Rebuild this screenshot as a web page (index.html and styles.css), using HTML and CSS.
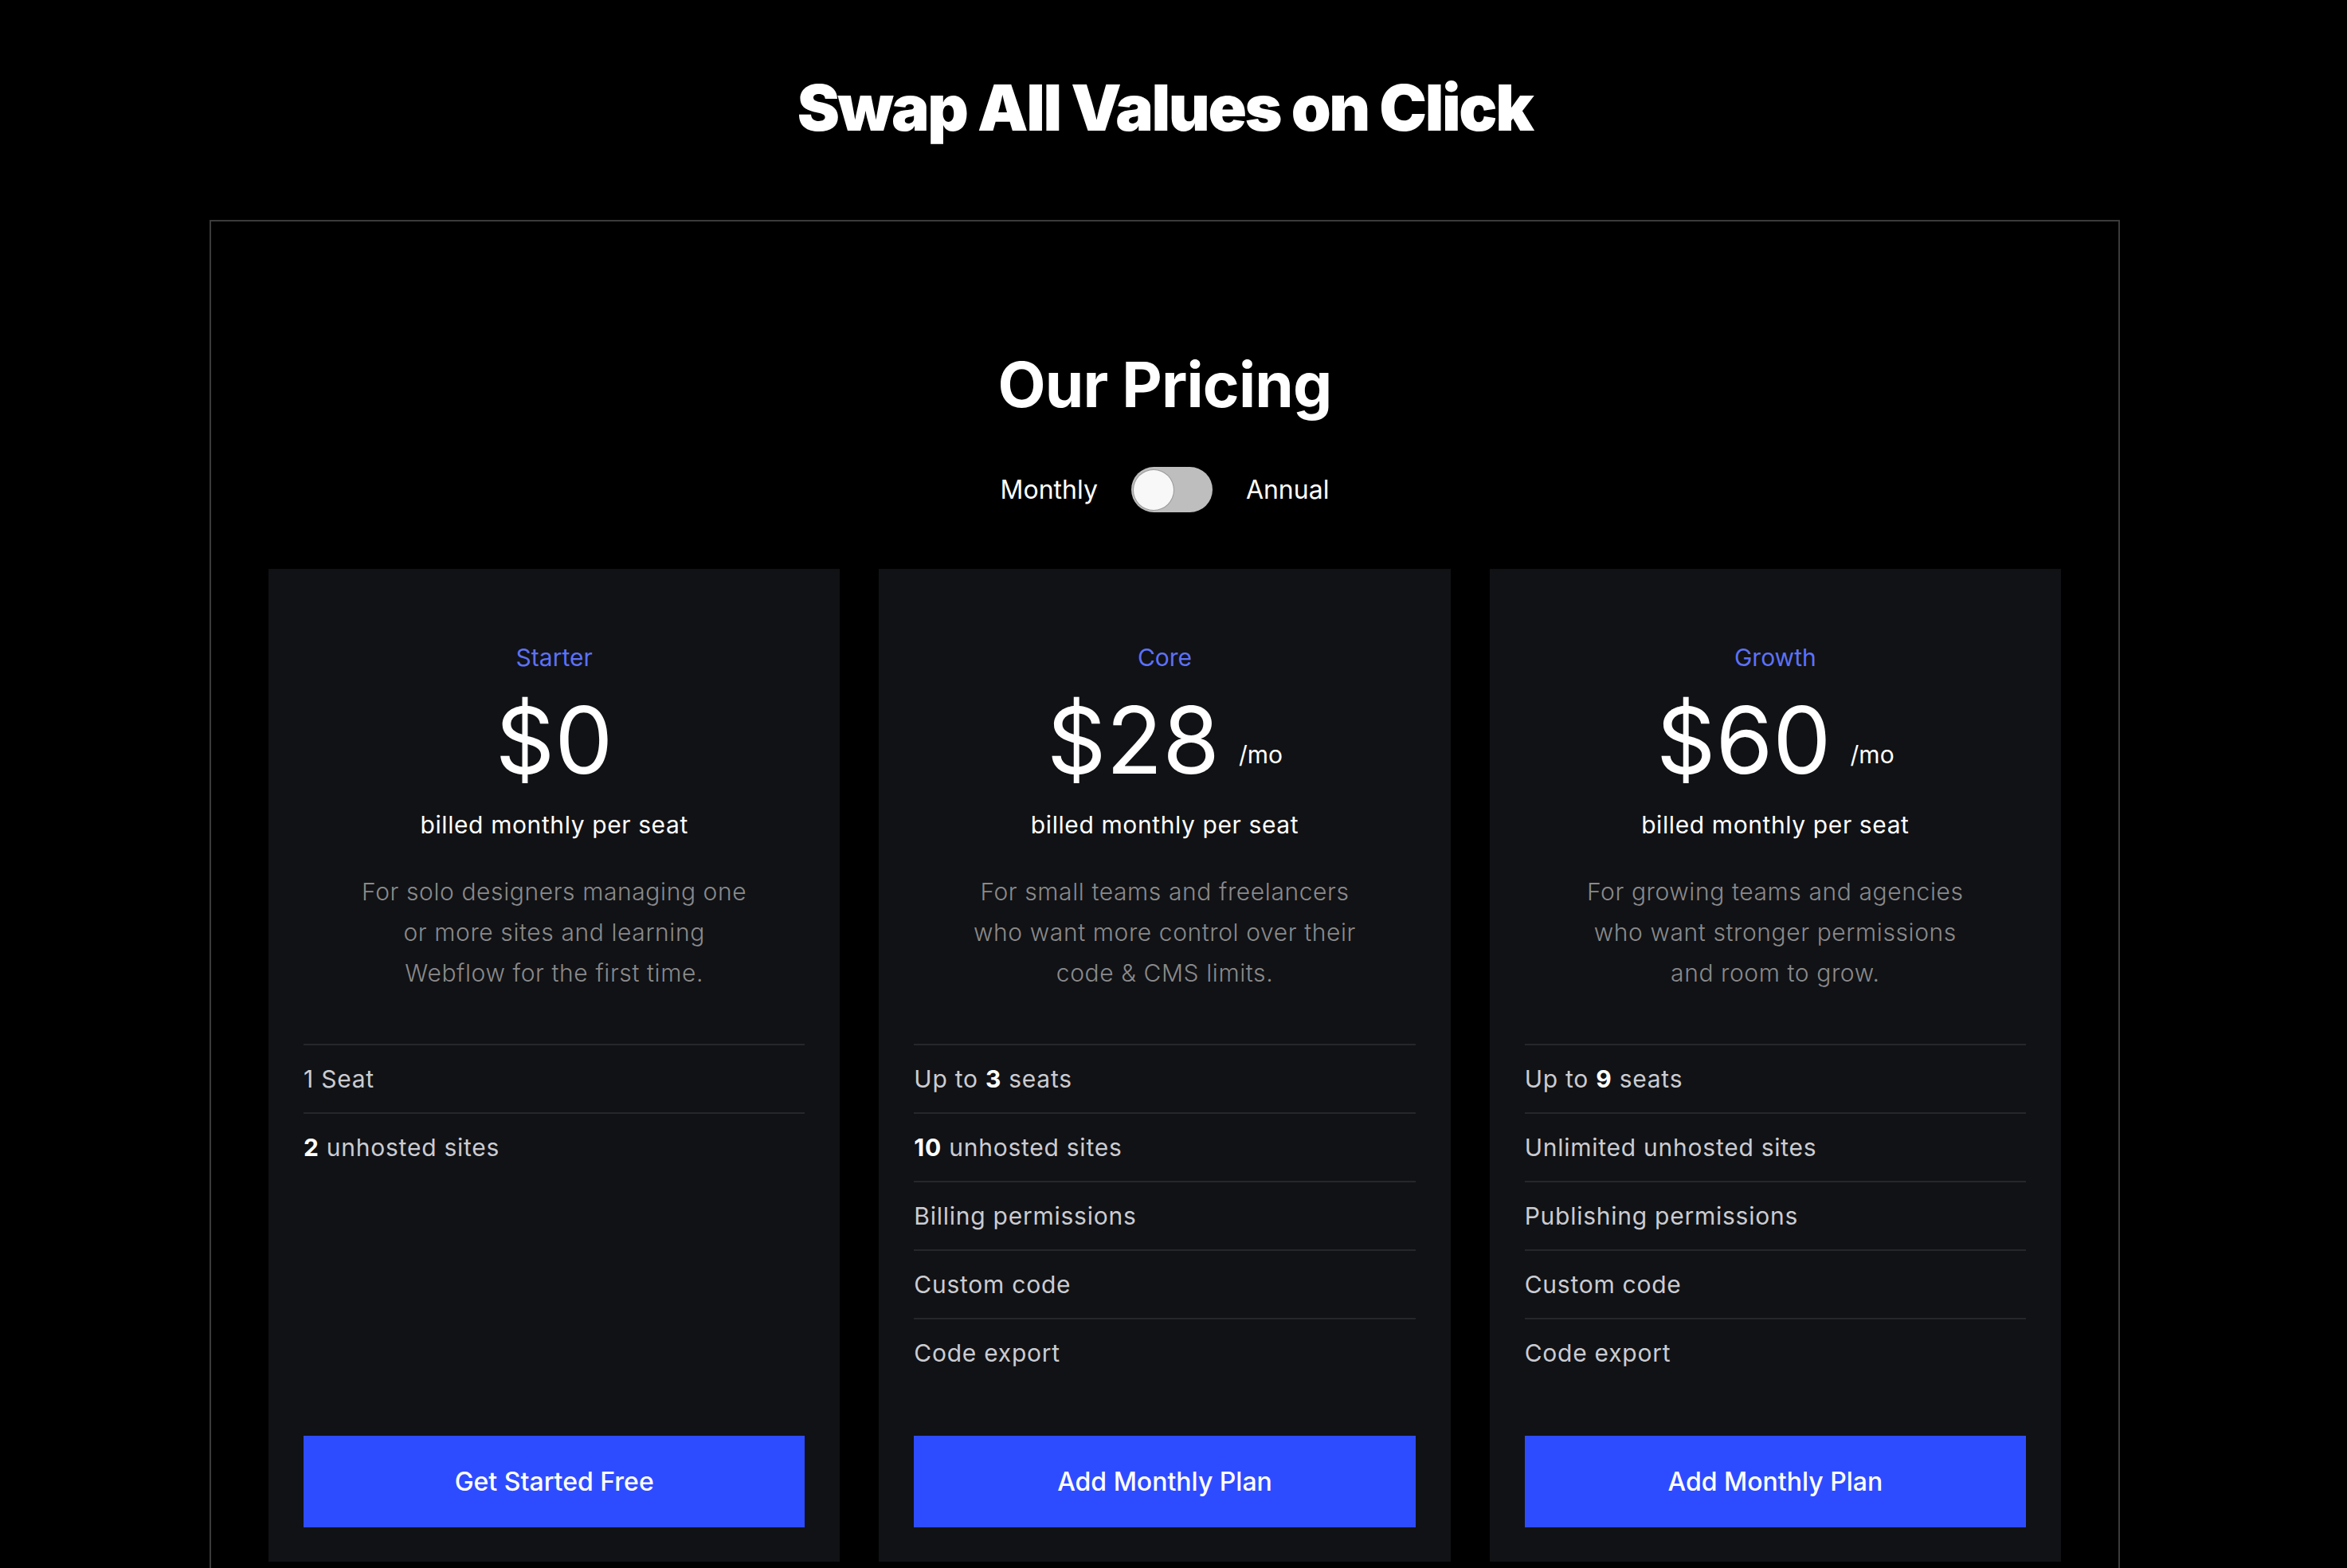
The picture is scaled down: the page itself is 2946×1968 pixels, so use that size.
FILE: index.html
```html
<!DOCTYPE html>
<html lang="en">
<head>
  <meta charset="UTF-8">
  <meta name="viewport" content="width=device-width, initial-scale=1.0">
  <title>Swap All Values on Click</title>
  <link rel="stylesheet" href="styles.css">
</head>
<body>
  <h1 class="page-title">Swap All Values on Click</h1>

  <section class="pricing">
    <h2 class="pricing-title">Our Pricing</h2>

    <div class="billing-switch">
      <span>Monthly</span>
      <button class="switch" type="button" aria-label="Toggle billing"><span class="switch-knob"></span></button>
      <span>Annual</span>
    </div>

    <div class="plans">
      <div class="plan">
        <div class="plan-name">Starter</div>
        <div class="plan-price"><span class="amount">$0</span></div>
        <div class="plan-billing">billed monthly per seat</div>
        <p class="plan-desc">For solo designers managing one or more sites and learning Webflow for the first time.</p>
        <ul class="plan-features">
          <li>1 Seat</li>
          <li><b>2</b> unhosted sites</li>
        </ul>
        <a class="plan-button" href="#">Get Started Free</a>
      </div>

      <div class="plan">
        <div class="plan-name">Core</div>
        <div class="plan-price"><span class="amount">$28</span><span class="per">/mo</span></div>
        <div class="plan-billing">billed monthly per seat</div>
        <p class="plan-desc">For small teams and freelancers who want more control over their code &amp; CMS limits.</p>
        <ul class="plan-features">
          <li>Up to <b>3</b> seats</li>
          <li><b>10</b> unhosted sites</li>
          <li>Billing permissions</li>
          <li>Custom code</li>
          <li>Code export</li>
        </ul>
        <a class="plan-button" href="#">Add Monthly Plan</a>
      </div>

      <div class="plan">
        <div class="plan-name">Growth</div>
        <div class="plan-price"><span class="amount">$60</span><span class="per">/mo</span></div>
        <div class="plan-billing">billed monthly per seat</div>
        <p class="plan-desc">For growing teams and agencies who want stronger permissions and room to grow.</p>
        <ul class="plan-features">
          <li>Up to <b>9</b> seats</li>
          <li>Unlimited unhosted sites</li>
          <li>Publishing permissions</li>
          <li>Custom code</li>
          <li>Code export</li>
        </ul>
        <a class="plan-button" href="#">Add Monthly Plan</a>
      </div>
    </div>
  </section>
</body>
</html>
```

FILE: styles.css
```css
body {
  font-family: Inter, "Noto Sans", Arial, sans-serif;
  margin: 0;
  padding: 0 22px 0 0;
  background-color: #000;
  color: #fff;
}

.page-title {
  margin: 0;
  padding-top: 83px;
  font-size: 80px;
  line-height: 103px;
  font-weight: 900;
  letter-spacing: -0.03em;
  text-align: center;
}

.pricing {
  width: 2250px;
  margin: 90px auto 0;
  padding: 158px 72px 120px;
  border: 2px solid #3b3b3b;
}

.pricing-title {
  margin: 0;
  font-size: 78px;
  line-height: 94px;
  font-weight: 700;
  letter-spacing: -0.01em;
  text-align: center;
}

.billing-switch {
  display: flex;
  align-items: center;
  justify-content: center;
  gap: 42px;
  margin-top: 56px;
  font-size: 32px;
}

.switch {
  width: 102px;
  height: 57px;
  padding: 3px;
  border: none;
  border-radius: 30px;
  background-color: #bebebe;
  display: flex;
  align-items: center;
  cursor: pointer;
}

.switch-knob {
  width: 50px;
  height: 50px;
  border-radius: 50%;
  background-color: #f8f8f8;
  box-shadow: 0 0 0 1px #9a9a9a;
}

.plans {
  display: grid;
  grid-template-columns: repeat(3, 1fr);
  gap: 49px;
  margin-top: 71px;
}

.plan {
  display: flex;
  flex-direction: column;
  align-items: center;
  padding: 93px 44px 43px;
  background-color: #111215;
  text-align: center;
}

.plan-name {
  font-size: 30px;
  line-height: 36px;
  color: #5d71f5;
}

.plan-price {
  display: flex;
  align-items: flex-end;
  gap: 24px;
  margin-top: 28px;
}

.amount {
  font-size: 116px;
  line-height: 116px;
}

.per {
  font-size: 30px;
  line-height: 36px;
  margin-bottom: 22px;
}

.plan-billing {
  margin-top: 30px;
  font-size: 30px;
  line-height: 36px;
  letter-spacing: 0.02em;
}

.plan-desc {
  max-width: 495px;
  margin: 41px 0 0;
  font-size: 30px;
  line-height: 51px;
  font-weight: 300;
  letter-spacing: 0.02em;
  color: #8a8a8c;
}

.plan-features {
  list-style: none;
  align-self: stretch;
  margin: 63px 0 62px;
  padding: 0;
  text-align: left;
}

.plan-features li {
  border-top: 2px solid #26272b;
  padding: 24px 0;
  font-size: 30px;
  line-height: 36px;
  letter-spacing: 0.025em;
  color: #cbccd2;
}

.plan-features b {
  color: #fff;
  font-weight: 700;
}

.plan-button {
  align-self: stretch;
  margin-top: auto;
  height: 115px;
  display: flex;
  align-items: center;
  justify-content: center;
  background-color: #2e4cff;
  color: #fff;
  font-size: 32px;
  font-weight: 500;
  text-decoration: none;
}
```
